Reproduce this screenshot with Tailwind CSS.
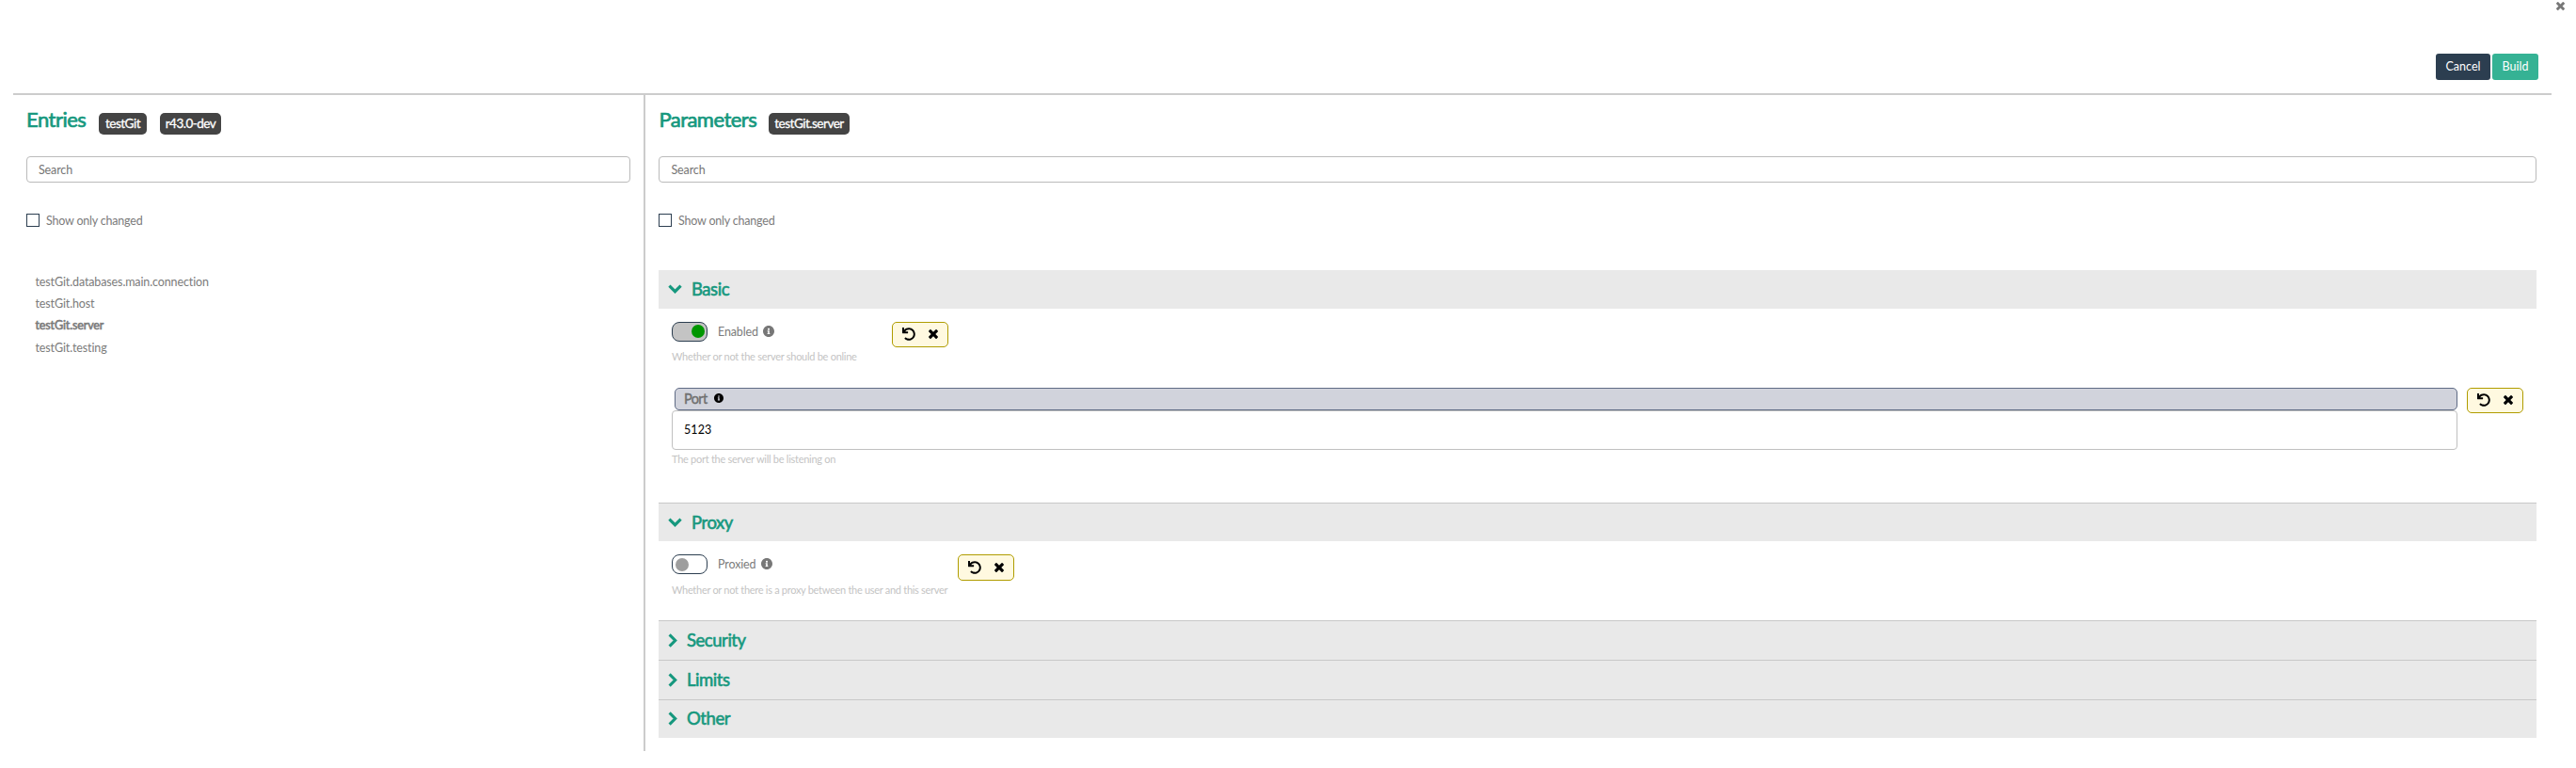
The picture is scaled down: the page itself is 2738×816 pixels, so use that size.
<!DOCTYPE html>
<html lang="en">
<head>
<meta charset="utf-8">
<title>Parameters</title>
<script src="https://cdn.jsdelivr.net/npm/@tailwindcss/browser@4"></script>
</head>
<body class="h-[816px] overflow-hidden bg-white font-['Lato',sans-serif] text-[12.5px] leading-[20px] tracking-[-0.12px] text-[#7b7b7b]">
<svg class="hidden">
  <symbol id="times" viewBox="302 366 1188 1188"><path d="M1490 1322q0 40-28 68l-136 136q-28 28-68 28t-68-28l-294-294-294 294q-28 28-68 28t-68-28l-136-136q-28-28-28-68t28-68l294-294-294-294q-28-28-28-68t28-68l136-136q28-28 68-28t68 28l294 294 294-294q28-28 68-28t68 28l136 136q28 28 28 68t-28 68l-294 294 294 294q28 28 28 68z"/></symbol>
  <symbol id="undo" viewBox="0 0 512 512"><path d="M212.333 224.333H12c-6.627 0-12-5.373-12-12V12C0 5.373 5.373 0 12 0h48c6.627 0 12 5.373 12 12v78.112C117.773 39.279 184.26 7.47 258.175 8.007c136.906.994 246.448 111.623 246.157 248.532C504.041 393.258 393.12 504 256.333 504c-64.089 0-122.496-24.313-166.51-64.215-5.099-4.622-5.334-12.554-.467-17.42l33.967-33.967c4.474-4.474 11.662-4.717 16.401-.525C170.76 415.336 211.58 432 256.333 432c97.268 0 176-78.716 176-176 0-97.267-78.716-176-176-176-58.496 0-110.28 28.476-142.274 72.333h98.274c6.627 0 12 5.373 12 12v48c0 6.627-5.373 12-12 12z"/></symbol>
  <symbol id="info" viewBox="8 8 496 496"><path d="M256 8C119.043 8 8 119.083 8 256c0 136.997 111.043 248 248 248s248-111.003 248-248C504 119.083 392.957 8 256 8zm0 110c23.196 0 42 18.804 42 42s-18.804 42-42 42-42-18.804-42-42 18.804-42 42-42zm56 254c0 6.627-5.373 12-12 12h-88c-6.627 0-12-5.373-12-12v-24c0-6.627 5.373-12 12-12h12v-64h-12c-6.627 0-12-5.373-12-12v-24c0-6.627 5.373-12 12-12h64c6.627 0 12 5.373 12 12v100h12c6.627 0 12 5.373 12 12v24z"/></symbol>
  <symbol id="down" viewBox="0 0 15 10"><path d="M1.4 1.6 7.5 7.7 13.6 1.6" fill="none" stroke="currentColor" stroke-width="3.1"/></symbol>
  <symbol id="right" viewBox="0 0 10 15"><path d="M1.6 1.4 7.7 7.5 1.6 13.6" fill="none" stroke="currentColor" stroke-width="3.1"/></symbol>
</svg>

<header class="flex h-[99px] flex-col items-end">
  <button class="mt-[2px] mr-[12px] h-[9px] w-[9px]"><svg class="block h-[9px] w-[9px] fill-[#777]"><use href="#times"/></svg></button>
  <div class="mt-[46px] mr-[40px] flex h-[28px] gap-[2px] tracking-[0.05px] text-white">
    <button class="w-[58px] rounded-[3px] bg-[#2c3e50]">Cancel</button>
    <button class="w-[49px] rounded-[3px] bg-[#35b294]">Build</button>
  </div>
</header>

<main class="mr-[26px] ml-[14px] flex h-[699px] border-t-2 border-[#ccc]">
  <aside class="w-[672px] shrink-0 border-r-2 border-[#ccc] pr-[14px] pl-[14px]">
    <div class="flex h-[64px] items-start pt-[13px]">
      <h1 class="w-[77px] text-[22px] leading-[26px] tracking-[-0.5px] text-[#16987e] [-webkit-text-stroke:0.7px]">Entries</h1>
      <span class="mt-[6px] mr-[14px] h-[23px] w-[51px] rounded-[5px] bg-[#444] text-center text-[13.5px] leading-[22px] tracking-[-0.5px] text-white [-webkit-text-stroke:0.3px]">testGit</span>
      <span class="mt-[6px] h-[23px] w-[65px] rounded-[5px] bg-[#444] text-center text-[13.5px] leading-[22px] tracking-[-0.5px] text-white [-webkit-text-stroke:0.3px]">r43.0-dev</span>
    </div>
    <div class="mt-[1px] flex h-[28px] items-center rounded-[4px] border border-[#bbb] pt-[1px] pl-[12px] text-[#757575]">Search</div>
    <label class="mt-[30px] flex items-center gap-[7px]"><span class="h-[14px] w-[14px] border border-[#2c3e50]"></span><span class="pt-[1px] -mb-[1px] tracking-[-0.2px]">Show only changed</span></label>
    <ul class="mt-[46px] pl-[9.5px]">
      <li class="h-[23px]">testGit.databases.main.connection</li>
      <li class="h-[23px]">testGit.host</li>
      <li class="h-[24px] [-webkit-text-stroke:0.6px]">testGit.server</li>
      <li class="h-[23px]">testGit.testing</li>
    </ul>
  </aside>

  <section class="min-w-0 flex-1 pr-[16px] pl-[14px]">
    <div class="flex h-[64px] items-start pt-[13px]">
      <h1 class="w-[117px] pl-[0.5px] text-[22px] leading-[26px] tracking-[-0.55px] text-[#16987e] [-webkit-text-stroke:0.7px]">Parameters</h1>
      <span class="mt-[6px] h-[23px] w-[86px] rounded-[5px] bg-[#444] text-center text-[13.5px] leading-[22px] tracking-[-0.5px] text-white [-webkit-text-stroke:0.3px]">testGit.server</span>
    </div>
    <div class="mt-[1px] flex h-[28px] items-center rounded-[4px] border border-[#bbb] pt-[1px] pl-[12.5px] text-[#757575]">Search</div>
    <label class="mt-[30px] flex items-center gap-[7px]"><span class="h-[14px] w-[14px] border border-[#2c3e50]"></span><span class="pt-[1px] -mb-[1px] tracking-[-0.2px]">Show only changed</span></label>

    <h2 class="mt-[43px] flex h-[41px] items-center bg-[#e9e9e9] pb-[1px] pl-[10px] text-[18.5px] tracking-[-0.45px] text-[#16987e] [-webkit-text-stroke:0.6px]"><svg class="mr-[10px] h-[10px] w-[15px]"><use href="#down"/></svg>Basic</h2>
    <div class="h-[206px] pt-[14px] pl-[14px]">
      <div class="flex h-[70px] items-start">
        <div class="w-[234px]">
          <div class="flex h-[21px] items-center">
            <span class="mr-[11px] flex h-[21px] w-[38px] items-center justify-end rounded-[8px] border border-[#2c3e50] bg-[#c4c4c4] pr-[2px]"><span class="mb-[1px] h-[14px] w-[14px] rounded-full bg-[#009600]"></span></span>
            <span class="w-[44px]">Enabled</span><svg class="mb-[1px] ml-[4px] h-[12px] w-[12px] fill-[#777]"><use href="#info"/></svg>
          </div>
          <p class="mt-[6px] text-[11px] tracking-[-0.27px] whitespace-nowrap text-[#c4c4c4]">Whether or not the server should be online</p>
        </div>
        <div class="flex h-[27px] w-[60px] items-center rounded-[5px] border border-[#b09c00] bg-[#fff9e0] pb-[1px] pl-[10px] fill-black"><svg class="mr-[14px] h-[14px] w-[14px]"><use href="#undo"/></svg><svg class="h-[10px] w-[10px]"><use href="#times"/></svg></div>
      </div>
      <div class="flex items-start gap-[10px]">
        <div class="w-[1898px]">
          <div class="ml-[3px] flex h-[24px] items-center rounded-[5px] border border-[#5f6b85] bg-[#d1d3dc] pl-[9px] text-[14.5px] tracking-[-0.6px] text-[#6f6f6f] [-webkit-text-stroke:0.4px]"><span class="w-[24px]">Port</span><svg class="mb-[3px] ml-[8px] h-[10px] w-[10px] fill-black"><use href="#info"/></svg></div>
          <div class="flex h-[42px] items-center rounded-[4px] border border-[#c0c0c0] bg-white pb-[1px] pl-[12px] tracking-[0.1px] text-black">5123</div>
          <p class="text-[11px] tracking-[-0.27px] whitespace-nowrap text-[#c4c4c4]">The port the server will be listening on</p>
        </div>
        <div class="flex h-[27px] w-[60px] items-center rounded-[5px] border border-[#b09c00] bg-[#fff9e0] pb-[1px] pl-[10px] fill-black"><svg class="mr-[14px] h-[14px] w-[14px]"><use href="#undo"/></svg><svg class="h-[10px] w-[10px]"><use href="#times"/></svg></div>
      </div>
    </div>

    <h2 class="flex h-[41px] items-center border-t border-[#c8c8c8] bg-[#e9e9e9] pl-[10px] text-[18.5px] tracking-[-0.45px] text-[#16987e] [-webkit-text-stroke:0.6px]"><svg class="mr-[10px] h-[10px] w-[15px]"><use href="#down"/></svg>Proxy</h2>
    <div class="flex h-[84px] items-start pt-[14px] pl-[14px]">
      <div class="w-[304px]">
        <div class="flex h-[21px] items-center">
          <span class="mr-[11px] flex h-[21px] w-[38px] items-center rounded-[8px] border border-[#2c3e50] bg-white pl-[3px]"><span class="h-[14px] w-[14px] rounded-full bg-[#9e9e9e]"></span></span>
          <span class="w-[42px]">Proxied</span><svg class="mb-[1px] ml-[4px] h-[12px] w-[12px] fill-[#777]"><use href="#info"/></svg>
        </div>
        <p class="mt-[7px] text-[11px] tracking-[-0.29px] whitespace-nowrap text-[#c4c4c4]">Whether or not there is a proxy between the user and this server</p>
      </div>
      <div class="flex h-[28px] w-[60px] items-center rounded-[5px] border border-[#b09c00] bg-[#fff9e0] pl-[10px] fill-black"><svg class="mr-[14px] h-[14px] w-[14px]"><use href="#undo"/></svg><svg class="h-[10px] w-[10px]"><use href="#times"/></svg></div>
    </div>
    <h2 class="flex h-[42px] items-center border-t border-[#c8c8c8] bg-[#e9e9e9] pb-[1px] pl-[10px] text-[18.5px] tracking-[-0.45px] text-[#16987e] [-webkit-text-stroke:0.6px]"><svg class="mr-[10px] h-[15px] w-[10px]"><use href="#right"/></svg>Security</h2>
    <h2 class="flex h-[42px] items-center border-t border-[#c8c8c8] bg-[#e9e9e9] pb-[1px] pl-[10px] text-[18.5px] tracking-[-0.45px] text-[#16987e] [-webkit-text-stroke:0.6px]"><svg class="mr-[10px] h-[15px] w-[10px]"><use href="#right"/></svg>Limits</h2>
    <h2 class="flex h-[41px] items-center border-t border-[#c8c8c8] bg-[#e9e9e9] pb-[2px] pl-[10px] text-[18.5px] tracking-[-0.45px] text-[#16987e] [-webkit-text-stroke:0.6px]"><svg class="mr-[10px] h-[15px] w-[10px]"><use href="#right"/></svg>Other</h2>
  </section>
</main>
</body>
</html>
